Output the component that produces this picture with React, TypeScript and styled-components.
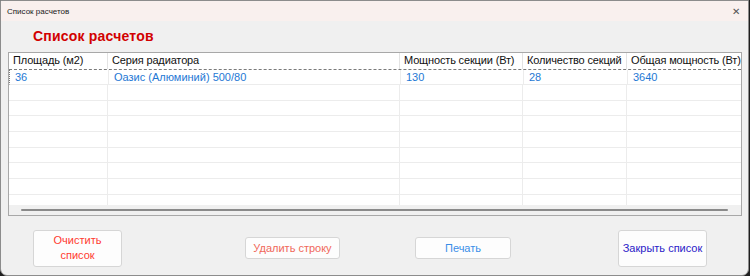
import React from 'react'
import styled, { createGlobalStyle } from 'styled-components'

const Global = createGlobalStyle`
  html, body {
    margin: 0;
    padding: 0;
    background: #1f1f1f;
  }
  body {
    font-family: 'Liberation Sans', Arial, sans-serif;
  }
`

const columns = [
  { title: 'Площадь (м2)', width: 99 },
  { title: 'Серия радиатора', width: 292 },
  { title: 'Мощность секции (Вт)', width: 123 },
  { title: 'Количество секций', width: 104 },
  { title: 'Общая мощность (Вт)', width: 115 },
]

const rows = [['36', 'Оазис (Алюминий) 500/80', '130', '28', '3640']]
const EMPTY_ROWS = 8

const Window = styled.div`
  width: 747px;
  height: 274px;
  border: 1px solid #8c8c8c;
  border-radius: 0 0 7px 7px;
  background: #f0f0f0;
  display: flex;
  flex-direction: column;
  overflow: hidden;
`

const TitleBar = styled.div`
  height: 20px;
  background: #f9f0ee;
  display: flex;
  align-items: center;
  justify-content: space-between;
  padding: 0 8px 0 6px;
  font-size: 8px;
  color: #1a1a1a;
`

const CloseMark = styled.span`
  font-family: 'DejaVu Sans', sans-serif;
  font-size: 10px;
  font-weight: 300;
  color: #555;
`

const Body = styled.div`
  flex: 1;
  display: flex;
  flex-direction: column;
  padding: 0 0 0 7px;
`

const Heading = styled.h1`
  margin: 6px 0 0 25px;
  height: 25px;
  font-size: 14px;
  line-height: 18px;
  font-weight: bold;
  color: #d20000;
  letter-spacing: 0.2px;
`

const TableBox = styled.div`
  width: 732px;
  height: 162px;
  border: 1px solid #a8a8a8;
  background: #f0f0f0;
  display: flex;
  flex-direction: column;
`

const Grid = styled.div`
  background: #fff;
  height: 152px;
  overflow: hidden;
`

const Row = styled.div<{ $focus?: boolean; $header?: boolean }>`
  display: flex;
  height: 15.66px;
  border-bottom: 1px solid #ececec;
  box-sizing: border-box;
  ${p => p.$header && 'border-bottom: none; height: 16px;'}
  ${p => p.$focus && 'border-top: 1px dashed #7a7a7a; border-left: 1px dotted #7a7a7a; height: 16px;'}
`

const Cell = styled.div<{ $w: number; $header?: boolean }>`
  width: ${p => p.$w}px;
  flex: none;
  box-sizing: border-box;
  padding-left: ${p => (p.$header ? 4 : 5)}px;
  border-right: 1px solid ${p => (p.$header ? '#e3e3e3' : '#ececec')};
  font-size: 11px;
  line-height: 15px;
  letter-spacing: ${p => (p.$header ? '-0.15px' : '0')};
  white-space: nowrap;
  overflow: hidden;
  color: ${p => (p.$header ? '#111' : '#1e78d4')};
`

const ScrollTrack = styled.div`
  flex: 1;
  display: flex;
  align-items: center;
  padding: 0 13px 0 12px;
`

const ScrollThumb = styled.div`
  flex: 1;
  height: 2px;
  background: #8a8a8a;
  border-radius: 1px;
`

const Buttons = styled.div`
  display: grid;
  grid-template-columns: 212px 170px 203px auto;
  align-items: center;
  padding-left: 25px;
  margin-top: 13px;
  height: 38px;
`

const Btn = styled.button<{ $w: number; $h: number; $color: string }>`
  width: ${p => p.$w}px;
  height: ${p => p.$h}px;
  background: #fdfdfd;
  border: 1px solid #d6d6d6;
  border-radius: 3px;
  font-family: 'Liberation Sans', Arial, sans-serif;
  font-size: 11px;
  line-height: 15px;
  color: ${p => p.$color};
  padding: 0;
  text-align: center;
`

export default function App() {
  return (
    <>
      <Global />
      <Window>
        <TitleBar>
          <span>Список расчетов</span>
          <CloseMark>✕</CloseMark>
        </TitleBar>
        <Body>
          <Heading>Список расчетов</Heading>
          <TableBox>
            <Grid>
              <Row $header>
                {columns.map(c => (
                  <Cell key={c.title} $w={c.width} $header>
                    {c.title}
                  </Cell>
                ))}
              </Row>
              {rows.map((r, i) => (
                <Row key={i} $focus>
                  {r.map((v, j) => (
                    <Cell key={j} $w={columns[j].width}>
                      {v}
                    </Cell>
                  ))}
                </Row>
              ))}
              {Array.from({ length: EMPTY_ROWS }).map((_, i) => (
                <Row key={'e' + i}>
                  {columns.map(c => (
                    <Cell key={c.title} $w={c.width} />
                  ))}
                </Row>
              ))}
            </Grid>
            <ScrollTrack>
              <ScrollThumb />
            </ScrollTrack>
          </TableBox>
          <Buttons>
            <Btn $w={89} $h={37} $color="#ff3b30">
              Очистить
              <br />
              список
            </Btn>
            <Btn $w={95} $h={22} $color="#f0685a">
              Удалить строку
            </Btn>
            <Btn $w={96} $h={22} $color="#3a8ee8">
              Печать
            </Btn>
            <Btn $w={89} $h={37} $color="#2a22c8">
              Закрыть список
            </Btn>
          </Buttons>
        </Body>
      </Window>
    </>
  )
}
